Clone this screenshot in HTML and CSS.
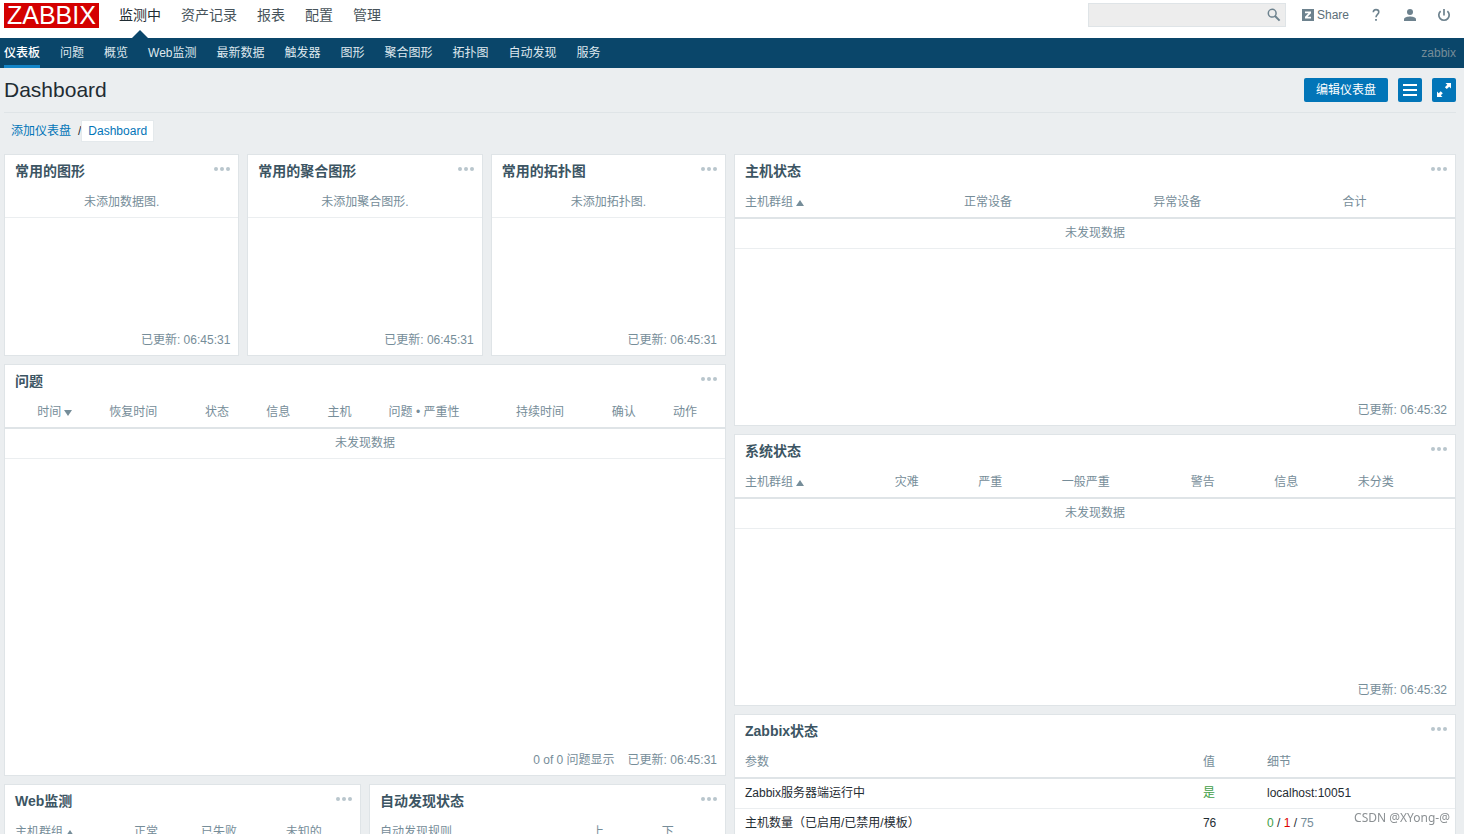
FILE: index.html
```html
<!DOCTYPE html>
<html lang="zh-CN">
<head>
<meta charset="utf-8">
<meta name="viewport" content="width=device-width, initial-scale=1">
<title>Dashboard</title>
<link rel="stylesheet" href="styles.css">
</head>
<body>
<header class="topbar">
  <a class="logo" href="#">ZABBIX</a>
  <nav class="main-nav" aria-label="主菜单">
    <a class="active" href="#">监测中</a>
    <a href="#">资产记录</a>
    <a href="#">报表</a>
    <a href="#">配置</a>
    <a href="#">管理</a>
  </nav>
  <form class="search">
    <input type="text" aria-label="搜索">
    <button type="button" aria-label="搜索">
      <svg width="14" height="14" viewBox="0 0 14 14"><circle cx="5.200" cy="5.200" r="3.900" fill="none" stroke="currentColor" stroke-width="1.500"/><path d="M8 8L12.600 12.600" stroke="currentColor" stroke-width="2"/></svg>
    </button>
  </form>
  <div class="user-nav">
    <a class="share" href="#"><span class="share-mark"><svg width="12" height="12" viewBox="0 0 12 12"><path d="M0 0h12v12H0z" fill="currentColor"/><path d="M3 2.500h6v1.800L5.500 7.700H9v1.800H3V7.700L6.500 4.300H3z" fill="#fff"/></svg></span>Share</a>
    <a class="icon" href="#" aria-label="帮助"><svg width="14" height="14" viewBox="0 0 14 14"><path d="M4.3 4.3C4.3 2.5 5.4 1.6 7 1.6S9.8 2.6 9.8 4.1C9.8 6.4 7 6.3 7 9.2" fill="none" stroke="currentColor" stroke-width="1.6"/><path d="M6.1 10.9h1.8v1.8H6.1z" fill="currentColor"/></svg></a>
    <a class="icon" href="#" aria-label="用户"><svg width="14" height="14" viewBox="0 0 14 14"><circle cx="7" cy="4" r="3" fill="currentColor"/><path d="M1 13v-1.600C1 9.400 4.600 8.600 7 8.600s6 .8 6 2.800V13z" fill="currentColor"/></svg></a>
    <a class="icon" href="#" aria-label="退出"><svg width="14" height="14" viewBox="0 0 14 14"><path d="M7 1v6.500M3.600 3.100a5.200 5.200 0 1 0 6.800 0" fill="none" stroke="currentColor" stroke-width="1.700"/></svg></a>
  </div>
</header>
<nav class="sub-nav" aria-label="监测中">
  <a class="active" href="#">仪表板</a>
  <a href="#">问题</a>
  <a href="#">概览</a>
  <a href="#">Web监测</a>
  <a href="#">最新数据</a>
  <a href="#">触发器</a>
  <a href="#">图形</a>
  <a href="#">聚合图形</a>
  <a href="#">拓扑图</a>
  <a href="#">自动发现</a>
  <a href="#">服务</a>
  <span class="server">zabbix</span>
</nav>
<main>
  <div class="page-head">
    <h1>Dashboard</h1>
    <div class="actions">
      <button class="btn" type="button">编辑仪表盘</button>
      <button class="btn square" type="button" aria-label="菜单"><svg width="24" height="24" viewBox="0 0 24 24"><path d="M5 7h14M5 12h14M5 17h14" stroke="#fff" stroke-width="2"/></svg></button>
      <button class="btn square" type="button" aria-label="全屏"><svg width="24" height="24" viewBox="0 0 24 24"><path d="M13.500 5H19v5.500l-1.800-1.800-2.400 2.400-1.900-1.900 2.400-2.400zM5 13.500l1.700 1.700 2-2 2.100 2.100-2 2 1.700 1.700H5z" fill="#fff"/></svg></button>
    </div>
  </div>
  <div class="crumbs"><a href="#">添加仪表盘</a><span>/</span><a class="current" href="#">Dashboard</a></div>

  <div class="dashboard">
    <div class="board">
      <section class="widget third">
        <div class="widget-head"><h2>常用的图形</h2><button class="more" type="button" aria-label="更多"><i></i><i></i><i></i></button></div>
        <p class="nothing">未添加数据图.</p>
        <div class="widget-foot">已更新: 06:45:31</div>
      </section>
      <section class="widget third">
        <div class="widget-head"><h2>常用的聚合图形</h2><button class="more" type="button" aria-label="更多"><i></i><i></i><i></i></button></div>
        <p class="nothing">未添加聚合图形.</p>
        <div class="widget-foot">已更新: 06:45:31</div>
      </section>
      <section class="widget third">
        <div class="widget-head"><h2>常用的拓扑图</h2><button class="more" type="button" aria-label="更多"><i></i><i></i><i></i></button></div>
        <p class="nothing">未添加拓扑图.</p>
        <div class="widget-foot">已更新: 06:45:31</div>
      </section>
      <section class="widget problems">
        <div class="widget-head"><h2>问题</h2><button class="more" type="button" aria-label="更多"><i></i><i></i><i></i></button></div>
        <table>
          <thead><tr><th></th><th><a href="#">时间<span class="arrow down"></span></a></th><th>恢复时间</th><th>状态</th><th>信息</th><th>主机</th><th>问题 • 严重性</th><th>持续时间</th><th>确认</th><th>动作</th></tr></thead>
          <tbody><tr><td class="empty" colspan="10">未发现数据</td></tr></tbody>
        </table>
        <div class="widget-foot"><span>0 of 0 问题显示</span><span>已更新: 06:45:31</span></div>
      </section>
      <section class="widget half web">
        <div class="widget-head"><h2>Web监测</h2><button class="more" type="button" aria-label="更多"><i></i><i></i><i></i></button></div>
        <table>
          <thead><tr><th><a href="#">主机群组<span class="arrow"></span></a></th><th>正常</th><th>已失败</th><th>未知的</th></tr></thead>
        </table>
      </section>
      <section class="widget half discovery">
        <div class="widget-head"><h2>自动发现状态</h2><button class="more" type="button" aria-label="更多"><i></i><i></i><i></i></button></div>
        <table>
          <thead><tr><th>自动发现规则</th><th>上</th><th>下</th></tr></thead>
        </table>
      </section>
    </div>
    <div class="board">
      <section class="widget wide hosts">
        <div class="widget-head"><h2>主机状态</h2><button class="more" type="button" aria-label="更多"><i></i><i></i><i></i></button></div>
        <table>
          <thead><tr><th><a href="#">主机群组<span class="arrow"></span></a></th><th>正常设备</th><th>异常设备</th><th>合计</th></tr></thead>
          <tbody><tr><td class="empty" colspan="4">未发现数据</td></tr></tbody>
        </table>
        <div class="widget-foot">已更新: 06:45:32</div>
      </section>
      <section class="widget wide system">
        <div class="widget-head"><h2>系统状态</h2><button class="more" type="button" aria-label="更多"><i></i><i></i><i></i></button></div>
        <table>
          <thead><tr><th><a href="#">主机群组<span class="arrow"></span></a></th><th>灾难</th><th>严重</th><th>一般严重</th><th>警告</th><th>信息</th><th>未分类</th></tr></thead>
          <tbody><tr><td class="empty" colspan="7">未发现数据</td></tr></tbody>
        </table>
        <div class="widget-foot">已更新: 06:45:32</div>
      </section>
      <section class="widget wide status">
        <div class="widget-head"><h2>Zabbix状态</h2><button class="more" type="button" aria-label="更多"><i></i><i></i><i></i></button></div>
        <table>
          <thead><tr><th>参数</th><th>值</th><th>细节</th></tr></thead>
          <tbody>
            <tr><td>Zabbix服务器端运行中</td><td class="green">是</td><td>localhost:10051</td></tr>
            <tr><td>主机数量（已启用/已禁用/模板）</td><td>76</td><td><span class="green">0</span> / <span class="red">1</span> / <span class="grey">75</span></td></tr>
          </tbody>
        </table>
      </section>
    </div>
  </div>
</main>
<div class="watermark">CSDN @XYong-@</div>
</body>
</html>
```
FILE: styles.css
```css
* { box-sizing: border-box; }
body {
  margin: 0;
  background: #ebeef0;
  color: #1f2c33;
  font: 12px/16px "Liberation Sans", "Noto Sans CJK SC", sans-serif;
}
a { color: inherit; text-decoration: none; }
h1, h2, p { margin: 0; }
button { padding: 0; border: 0; background: none; font: inherit; color: inherit; cursor: pointer; }
svg { display: block; }

.topbar { display: flex; align-items: flex-start; height: 38px; padding: 3px 13px 0 4px; background: #fff; }
.logo { padding: 0 3px; background: #d40000; color: #fff; font-size: 25px; line-height: 25px; }
.main-nav { display: flex; gap: 20px; margin-left: 20px; font-size: 14px; line-height: 24px; color: #47535a; }
.main-nav a { position: relative; height: 35px; }
.main-nav .active { color: #1f2c33; }
.main-nav .active::after {
  content: "";
  position: absolute;
  left: 50%;
  bottom: 0;
  margin-left: -8px;
  border: 8px solid transparent;
  border-top: 0;
  border-bottom-color: #0a466a;
}
.search { display: flex; align-items: center; width: 198px; height: 24px; margin-left: auto; padding-right: 4px; border: 1px solid #dfe4e7; background: #ededed; color: #6d828e; }
.search input { flex: 1; min-width: 0; height: 22px; padding: 0 5px; border: 0; background: none; font: inherit; }
.user-nav { display: flex; align-items: center; gap: 20px; height: 24px; margin-left: 16px; color: #6d828e; }
.share { display: flex; align-items: center; gap: 3px; color: #5c6f79; }
.share-mark { color: #6d828e; }

.sub-nav { display: flex; gap: 20px; height: 30px; padding: 0 8px 0 4px; background: #0a466a; color: #dfe8ee; line-height: 30px; }
.sub-nav .active { border-bottom: 3px solid #1385c8; color: #fff; font-weight: 500; }
.sub-nav .server { margin-left: auto; color: #768d99; }

main { padding: 0 8px 4px 4px; }
.page-head { display: flex; justify-content: space-between; align-items: center; height: 45px; border-bottom: 1px solid #dfe4e7; }
h1 { font-size: 21px; line-height: 24px; font-weight: 400; }
.actions { display: flex; gap: 10px; }
.btn { height: 24px; padding: 0 12px; border-radius: 2px; background: #0275b8; color: #fff; }
.btn.square { width: 24px; padding: 0; }
.crumbs { display: flex; align-items: center; margin: 7px 0 12px; padding-left: 7px; color: #1f2c33; line-height: 20px; }
.crumbs a { color: #0275b8; }
.crumbs span { margin: 0 0 0 7px; }
.crumbs .current { padding: 0 6px; border: 1px solid #e4e9ec; background: #fff; }

.dashboard { display: grid; grid-template-columns: 1fr 1fr; gap: 8px; }
.board { display: grid; grid-template-columns: repeat(6, 1fr); grid-auto-rows: 62px; gap: 8px; }
.widget { display: flex; flex-direction: column; min-width: 0; border: 1px solid #dfe4e7; background: #fff; }
.third { grid-column: span 2; grid-row: span 3; }
.half { grid-column: span 3; grid-row: span 3; }
.problems { grid-column: span 6; grid-row: span 6; }
.wide { grid-column: span 6; grid-row: span 4; }
.widget-head { display: flex; justify-content: space-between; height: 32px; padding: 0 8px 0 10px; }
h2 { font-size: 14px; line-height: 32px; color: #3c5563; }
.more { display: flex; align-items: center; gap: 2px; height: 28px; }
.more i { width: 4px; height: 4px; border-radius: 50%; background: #b9c6cd; }
.nothing { height: 31px; border-bottom: 1px solid #ebeef0; color: #768d99; text-align: center; line-height: 30px; }
.widget-foot { display: flex; justify-content: flex-end; gap: 13px; margin-top: auto; padding: 0 8px 7px; color: #768d99; }

table { width: 100%; border-collapse: separate; border-spacing: 0; table-layout: fixed; }
th, td { padding: 0 0 0 10px; text-align: left; white-space: nowrap; }
th { height: 32px; border-bottom: 2px solid #dfe4e7; color: #768d99; font-weight: 400; }
td { height: 30px; padding-bottom: 2px; border-bottom: 1px solid #ebeef0; }
.empty { padding-left: 0; color: #768d99; text-align: center; }
.arrow { display: inline-block; margin-left: 3px; border: 4px solid transparent; border-top: 0; border-bottom: 6px solid #768d99; }
.arrow.down { border-top: 6px solid #768d99; border-bottom: 0; }
.green { color: #429e47; }
.red { color: #dc0000; }
.grey { color: #768d99; }

.hosts th:nth-child(1) { width: 30.4%; }
.hosts th:nth-child(2), .hosts th:nth-child(3) { width: 26.3%; }
.system th:nth-child(1) { width: 20.8%; }
.system th:nth-child(2), .system th:nth-child(3), .system th:nth-child(5), .system th:nth-child(6) { width: 11.6%; }
.system th:nth-child(4) { width: 17.9%; }
.problems th:nth-child(1) { width: 3.1%; }
.problems th:nth-child(2) { width: 10%; }
.problems th:nth-child(3), .problems th:nth-child(8) { width: 13.3%; }
.problems th:nth-child(4), .problems th:nth-child(5), .problems th:nth-child(6), .problems th:nth-child(9) { width: 8.5%; }
.problems th:nth-child(7) { width: 17.7%; }
.status th:nth-child(1) { width: 63.6%; }
.status th:nth-child(2) { width: 8.9%; }
.web th:nth-child(1) { width: 33.5%; }
.web th:nth-child(2) { width: 18.9%; }
.web th:nth-child(3) { width: 23.9%; }
.discovery th:nth-child(1) { width: 59.7%; }
.discovery th:nth-child(2) { width: 19.7%; }

.watermark { position: fixed; right: 14px; bottom: 8px; color: #8b9093; font-family: "Noto Sans", sans-serif; }
```
